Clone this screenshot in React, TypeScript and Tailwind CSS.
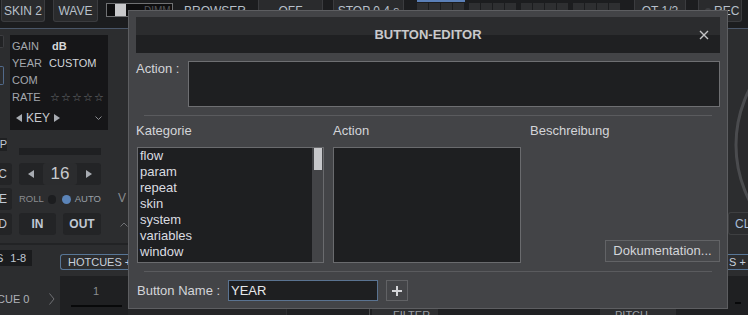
const categories = ["flow", "param", "repeat", "skin", "system", "variables", "window"];

function TopBtn({ label, className }: { label: string; className: string }) {
  return (
    <div
      className={`flex h-[22px] shrink-0 items-center justify-center rounded-b-[3px] border border-t-0 border-[#3b3c3f] bg-[#2a2b2d] text-[12px] text-[#b8c0ca] ${className}`}
    >
      {label}
    </div>
  );
}

function Tri({ dir }: { dir: "l" | "r" }) {
  return (
    <svg width="6" height="8" viewBox="0 0 6 8">
      <polygon points={dir === "l" ? "6,0 6,8 0,4" : "0,0 0,8 6,4"} fill="#a8acb2" />
    </svg>
  );
}

function TopBar() {
  return (
    <div className="flex h-[29px] shrink-0 items-start border-b border-[#4a5668] bg-[#1c1d1f]">
      <TopBtn label="SKIN 2" className="ml-[1px] w-[44px]" />
      <TopBtn label="WAVE" className="ml-[8px] w-[45px]" />
      <div className="ml-[8px] mt-[3px] flex h-[14px] w-[67px] shrink-0 items-center border border-[#707173] bg-[#0e0e0f]">
        <div className="ml-[8px] h-[12px] w-[11px] bg-[#c9c9cb]" />
        <span className="ml-[18px] text-[10px] text-[#55565a]">DIMM</span>
      </div>
      <TopBtn label="BROWSER" className="ml-[7px] w-[70px] border-transparent bg-transparent" />
      <TopBtn label="OFF" className="ml-[8px] w-[65px]" />
      <TopBtn label="STOP 0.4 s" className="ml-[10px] w-[71px]" />
      <div className="ml-[13px] flex w-[204px] shrink-0 flex-col">
        <div className="h-[2px] w-[48px] bg-[#5b80b8]" />
        <div className="mt-[1px] flex gap-[5px]">
          {[0, 1, 2, 3].map((g) => (
            <div key={g} className="flex gap-[1px]">
              {[0, 1, 2, 3].map((s) => (
                <div key={s} className="h-[8px] w-[11px] bg-[#2e2f31]" />
              ))}
            </div>
          ))}
        </div>
      </div>
      <TopBtn label="OT 1/2" className="ml-[13px] w-[52px]" />
      <div className="ml-[12px] flex h-[22px] w-[44px] shrink-0 items-center rounded-b-[3px] border border-t-0 border-[#3b3c3f] bg-[#2a2b2d] pl-[6px] text-[12px] text-[#b8c0ca]">
        <div className="h-[6px] w-[6px] rounded-full bg-[#3d3e41]" />
        <span className="ml-[3px]">REC</span>
      </div>
    </div>
  );
}

function LeftPanel() {
  return (
    <div className="flex w-[128px] shrink-0 flex-col bg-[#2c2d2f] text-[#c0c8d4]">
      {/* deck info */}
      <div className="flex h-[101px] pt-[6px]">
        <div className="flex w-[4px] flex-col">
          <div className="h-[13px] rounded-r-[2px] border border-l-0 border-[#3c3d40] bg-[#222325]" />
          <div className="mt-[18px] h-[19px] rounded-r-[2px] border border-l-0 border-[#51698a]" />
        </div>
        <div className="ml-[6px] flex h-[95px] w-[98px] flex-col bg-[#161618] pl-[2px] pt-[3px] text-[11px]">
          {[
            ["GAIN", "dB"],
            ["YEAR", "CUSTOM"],
            ["COM", ""],
          ].map(([k, v]) => (
            <div key={k} className="flex h-[17px] items-center">
              <span className="w-[37px] text-[#a4a8ae]">{k}</span>
              <span className={k === "GAIN" ? "ml-[3px] font-bold text-[#d8d8da]" : "text-[#d2d5da]"}>{v}</span>
            </div>
          ))}
          <div className="flex h-[17px] items-center">
            <span className="w-[38px] text-[#a4a8ae]">RATE</span>
            <span className="text-[11px] tracking-[1px] text-[#6f7175]">☆☆☆☆☆</span>
          </div>
          <div className="mt-[2px] flex h-[20px] items-center gap-[4px] pl-[4px] text-[12px] text-[#c8cbd0]">
            <Tri dir="l" />
            <span>KEY</span>
            <Tri dir="r" />
            <svg className="ml-auto mr-[6px]" width="7" height="5" viewBox="0 0 7 5">
              <path d="M0.5 0.5 L3.5 3.5 L6.5 0.5" stroke="#8a8c90" fill="none" />
            </svg>
          </div>
        </div>
      </div>

      {/* loop controls */}
      <div className="mt-[8px] flex h-[102px]">
        <div className="flex w-[12px] flex-col text-[12px]">
          <div className="flex h-[13px] w-[7px] justify-end overflow-hidden bg-[#1f2022] text-[11px] leading-[13px]">
            <span>TAP</span>
          </div>
          {["SYNC", "CUE", "LOAD"].map((t, i) => (
            <div
              key={t}
              className={`${i === 0 ? "mt-[12px]" : "mt-[3px]"} flex h-[22px] items-center justify-end overflow-hidden rounded-r-[3px] bg-[#232426] pr-[5px]`}
            >
              {t}
            </div>
          ))}
        </div>
        <div className="ml-[7px] flex w-[82px] flex-col">
          <div className="mt-[10px] h-[7px] bg-[#1f2022]" />
          <div className="mt-[8px] flex h-[22px] rounded-[3px] bg-[#232426]">
            <div className="flex w-[24px] items-center justify-center">
              <Tri dir="l" />
            </div>
            <div className="flex w-[34px] items-center justify-center rounded-[3px] bg-[#2b2c2e] text-[17px] text-[#c8cacd]">
              16
            </div>
            <div className="flex w-[24px] items-center justify-center">
              <Tri dir="r" />
            </div>
          </div>
          <div className="mt-[6px] flex h-[16px] items-center text-[9.5px]">
            <span className="text-[#8a8c90]">ROLL</span>
            <div className="ml-[4px] h-[9px] w-[9px] rounded-full bg-[#1c1d1f]" />
            <div className="ml-[6px] h-[9px] w-[9px] rounded-full bg-[#5b84b8]" />
            <span className="ml-[4px] text-[#9aa0a8]">AUTO</span>
          </div>
          <div className="mt-[6px] flex h-[22px] gap-[7px] text-[12px] font-bold">
            <div className="flex w-[37px] items-center justify-center rounded-[3px] bg-[#232426]">IN</div>
            <div className="flex w-[38px] items-center justify-center rounded-[3px] bg-[#232426]">OUT</div>
          </div>
        </div>
        <div className="ml-[7px] w-px bg-[#3a3b3d]" />
        <div className="ml-[10px] flex flex-col text-[12px] text-[#8a8c90]">
          <span className="mt-[51px]">V</span>
          <svg className="ml-[2px] mt-[15px]" width="8" height="5" viewBox="0 0 8 5">
            <path d="M0.5 4.5 L4 1 L7.5 4.5" stroke="#6f7175" fill="none" />
          </svg>
        </div>
      </div>

      {/* hotcues */}
      <div className="mt-[3px] h-[2px] bg-[#222325]" />
      <div className="flex flex-1">
        <div className="flex w-[60px] flex-col text-[11px]">
          <div className="mt-[5px] flex h-[16px] w-[32px] items-center overflow-hidden bg-[#1a1b1d]">
            <span className="-ml-[4px]">S</span>
            <span className="ml-[7px]">1-8</span>
          </div>
          <div className="mt-[25px] flex h-[16px] items-center text-[#aeb2b8]">
            <span className="-ml-[3px]">CUE 0</span>
            <svg className="ml-[20px]" width="6" height="12" viewBox="0 0 6 12">
              <path d="M0.5 0.5 L5 6 L0.5 11.5" stroke="#6f7175" fill="none" />
            </svg>
          </div>
        </div>
        <div className="flex w-[68px] flex-col">
          <div className="mt-[9px] flex h-[16px] items-center overflow-hidden rounded-l-[3px] border border-r-0 border-[#587696] pl-[7px] text-[11px] text-[#c8d0dc]">
            HOTCUES +
          </div>
          <div className="mt-[6px] flex flex-1 flex-col items-center bg-[#1f2022] pl-[4px]">
            <span className="mt-[7px] text-[11px] text-[#8a8c90]">1</span>
            <div className="mt-[5px] h-[2px] w-[51px] bg-[#08090a]" />
          </div>
        </div>
      </div>
    </div>
  );
}

function CenterBottom() {
  return (
    <div className="flex flex-1 flex-col">
      <div className="flex-1" />
      <div className="flex h-[8px] bg-[#1f2022] text-[11px] leading-[13px] text-[#9a9ea4]">
        <div className="w-[158px] bg-[#242527]" />
        <div className="w-px bg-[#2e2f31]" />
        <div className="w-[82px]" />
        <div className="w-px bg-[#4a4b4d]" />
        <div className="ml-[2px] w-[66px] bg-[#2d2e30] pl-[21px] pt-[2px]">FILTER</div>
        <div className="w-[162px]" />
        <div className="w-[76px] bg-[#2d2e30] pl-[15px] pt-[2px]">PITCH</div>
      </div>
    </div>
  );
}

function RightPanel() {
  return (
    <div className="flex w-[20px] shrink-0 flex-col overflow-hidden bg-[#2c2d2f]">
      <svg width="20" height="183" viewBox="0 0 20 183" className="shrink-0">
        <circle cx="130" cy="116" r="122" fill="#29292b" stroke="#4a4b4e" strokeWidth="3" />
      </svg>
      <div className="flex h-[23px] shrink-0 items-center overflow-hidden rounded-l-[3px] border border-r-0 border-[#3e3f41] bg-[#2b2c2e] pl-[6px] text-[12px] text-[#a8bcd8]">
        CLEAR
      </div>
      <div className="mt-[19px] flex h-[16px] shrink-0 items-center overflow-hidden border-y border-[#587696] text-[11px] text-[#c8d0dc]">
        <span className="ml-[1px]">S +</span>
      </div>
      <div className="mt-[6px] flex flex-1 flex-col bg-[#1f2022] pl-[7px]">
        <div className="mt-[26px] h-[2px] w-[6px] bg-[#08090a]" />
      </div>
    </div>
  );
}

function ButtonEditor() {
  return (
    <div className="absolute left-[128px] top-[10px] w-[600px] border border-[#5d5e61] bg-[#434447] px-[7px] pb-[7px] pt-[6px] text-[13px] leading-[16px] text-[#d3d5d9]">
      <div className="relative flex h-[36px] items-center justify-center bg-[linear-gradient(#2b2c2e_50%,#1f2022_50%)]">
        <span className="font-bold text-[#c9c9cb]">BUTTON-EDITOR</span>
        <svg className="absolute right-[11px] top-[13px]" width="10" height="10" viewBox="0 0 10 10">
          <path d="M1 1 L9 9 M9 1 L1 9" stroke="#c4c4c6" strokeWidth="1.4" />
        </svg>
      </div>

      <div className="mt-[8px] flex items-start">
        <span className="w-[52px] shrink-0">Action :</span>
        <div className="h-[46px] flex-1 border border-[#6e6f72] bg-[#1e1f21]" />
      </div>

      <div className="mx-[8px] mt-[8px] h-px bg-[#5a5b5e]" />

      <div className="mt-[7px] grid grid-cols-[187px_188px_1fr] gap-x-[9px] pl-[1px]">
        <span className="-ml-[1px]">Kategorie</span>
        <span>Action</span>
        <span>Beschreibung</span>
      </div>

      <div className="mt-[8px] grid h-[116px] grid-cols-[187px_188px_1fr] gap-x-[9px] pl-[1px]">
        <div className="flex border border-[#6a6b6e]">
          <div className="flex-1 bg-[#1e1f21] pl-[2px] text-[#dadce0]">
            {categories.map((c) => (
              <div key={c} className="h-[16px]">
                {c}
              </div>
            ))}
          </div>
          <div className="w-[11px] bg-[#434447] pl-[2px] pr-[1px]">
            <div className="h-[22px] bg-[#c6c7ca]" />
          </div>
        </div>
        <div className="border border-[#6a6b6e] bg-[#1e1f21]" />
        <div className="flex flex-col items-end justify-end pb-[1px]">
          <button className="flex h-[22px] w-[115px] items-center justify-center border border-[#626366] bg-[#47484b] text-[#d3d5d9]">
            Dokumentation...
          </button>
        </div>
      </div>

      <div className="mx-[8px] mt-[8px] h-px bg-[#5a5b5e]" />

      <div className="mt-[8px] flex items-center pl-[1px]">
        <span className="w-[91px] shrink-0">Button Name :</span>
        <div className="flex h-[21px] w-[150px] shrink-0 items-center border border-[#5a7391] bg-[#1e1f21] px-[2px] text-[#e6e8ea]">
          YEAR
        </div>
        <button className="ml-[8px] flex h-[21px] w-[22px] shrink-0 items-center justify-center border border-[#616265] bg-[#444548]">
          <svg width="10" height="10" viewBox="0 0 10 10">
            <path d="M5 0 V10 M0 5 H10" stroke="#d4d5d8" strokeWidth="2" />
          </svg>
        </button>
      </div>
    </div>
  );
}

export default function App() {
  return (
    <div className="relative flex h-[315px] w-[748px] flex-col overflow-hidden whitespace-nowrap bg-[#2c2d2f] font-['Liberation_Sans',Arial,sans-serif]">
      <TopBar />
      <div className="flex flex-1">
        <LeftPanel />
        <CenterBottom />
        <RightPanel />
      </div>
      <ButtonEditor />
    </div>
  );
}
